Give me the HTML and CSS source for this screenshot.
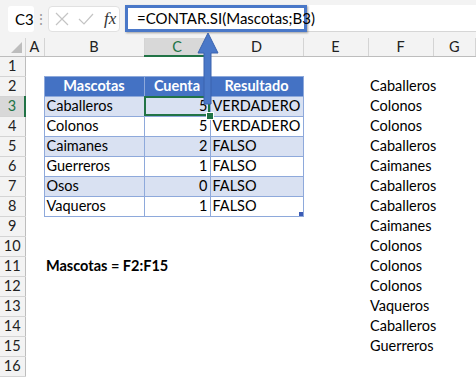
FILE: index.html
```html
<!DOCTYPE html>
<html lang="es">
<head>
    <meta charset="UTF-8">
    <title>CONTAR.SI</title>
    <link rel="stylesheet" href="styles.css">
</head>
<body>
    <div class="formula-bar">
        <div class="name-box">C3</div>
        <div class="dots">&#8942;</div>
        <div class="fx-box">
            <svg class="fx-icon" width="14" height="14" viewBox="0 0 14 14">
                <path d="M1 1 L13 13 M13 1 L1 13" stroke="#c4c4c4" stroke-width="1.2" fill="none"/>
            </svg>
            <svg class="fx-icon" width="16" height="12" viewBox="0 0 16 12">
                <path d="M1 6 L6 11 L15 1" stroke="#c4c4c4" stroke-width="1.2" fill="none"/>
            </svg>
            <span class="fx-label">fx</span>
        </div>
        <div class="formula-input">
            <div class="formula-text">=CONTAR.SI(Mascotas;B3)</div>
        </div>
    </div>

    <table class="sheet">
        <colgroup>
            <col style="width:25px"><col style="width:19px"><col style="width:100px"><col style="width:66px">
            <col style="width:93px"><col style="width:65px"><col style="width:65px"><col>
        </colgroup>
        <thead>
            <tr>
                <th class="corner"><span class="tri"></span></th>
                <th>A</th><th>B</th><th class="sel-col">C</th><th>D</th><th>E</th><th>F</th><th>G</th>
            </tr>
        </thead>
        <tbody>
            <tr><th>1</th><td></td><td></td><td></td><td></td><td></td><td></td><td></td></tr>
            <tr><th>2</th><td></td><td class="t hd">Mascotas</td><td class="t hd">Cuenta</td><td class="t hd">Resultado</td><td></td><td>Caballeros</td><td></td></tr>
            <tr><th class="sel-row">3</th><td></td><td class="t band">Caballeros</td><td class="t band num selected">5</td><td class="t band">VERDADERO</td><td></td><td>Colonos</td><td></td></tr>
            <tr><th>4</th><td></td><td class="t">Colonos</td><td class="t num">5</td><td class="t">VERDADERO</td><td></td><td>Colonos</td><td></td></tr>
            <tr><th>5</th><td></td><td class="t band">Caimanes</td><td class="t band num">2</td><td class="t band">FALSO</td><td></td><td>Caballeros</td><td></td></tr>
            <tr><th>6</th><td></td><td class="t">Guerreros</td><td class="t num">1</td><td class="t">FALSO</td><td></td><td>Caimanes</td><td></td></tr>
            <tr><th>7</th><td></td><td class="t band">Osos</td><td class="t band num">0</td><td class="t band">FALSO</td><td></td><td>Caballeros</td><td></td></tr>
            <tr><th>8</th><td></td><td class="t">Vaqueros</td><td class="t num">1</td><td class="t last">FALSO</td><td></td><td>Caballeros</td><td></td></tr>
            <tr><th>9</th><td></td><td></td><td></td><td></td><td></td><td>Caimanes</td><td></td></tr>
            <tr><th>10</th><td></td><td></td><td></td><td></td><td></td><td>Colonos</td><td></td></tr>
            <tr><th>11</th><td></td><td class="bold" colspan="2">Mascotas = F2:F15</td><td></td><td></td><td>Colonos</td><td></td></tr>
            <tr><th>12</th><td></td><td></td><td></td><td></td><td></td><td>Colonos</td><td></td></tr>
            <tr><th>13</th><td></td><td></td><td></td><td></td><td></td><td>Vaqueros</td><td></td></tr>
            <tr><th>14</th><td></td><td></td><td></td><td></td><td></td><td>Caballeros</td><td></td></tr>
            <tr><th>15</th><td></td><td></td><td></td><td></td><td></td><td>Guerreros</td><td></td></tr>
            <tr><th>16</th><td></td><td></td><td></td><td></td><td></td><td></td><td></td></tr>
        </tbody>
    </table>

    <!-- flecha que une la fórmula con la celda -->
    <svg class="arrow" width="24" height="74" viewBox="0 0 24 74">
        <path d="M12 1 L22 21 L15 21 L15 72 L8 72 L8 21 L2 21 Z" fill="#4A78C8" stroke="#3A63AE" stroke-width="1"/>
    </svg>
</body>
</html>
```

FILE: styles.css
```css
body {
    margin: 0;
    width: 476px;
    height: 377px;
    overflow: hidden;
    background: #fff;
    font-family: Lato, "Open Sans", sans-serif;
    font-size: 14.5px;
    color: #000;
    position: relative;
}
.formula-bar {
    height: 38px;
    background: #f3f3f3;
    display: flex;
    align-items: flex-start;
    box-sizing: border-box;
    padding-top: 6px;
}
.name-box {
    margin-left: 8px;
    width: 26px;
    height: 26px;
    background: #fff;
    border-radius: 3px;
    box-sizing: border-box;
    padding-left: 7px;
    line-height: 26px;
    font-size: 15px;
}
.dots {
    width: 14px;
    text-align: center;
    color: #999;
    line-height: 26px;
    font-size: 14px;
}
.fx-box {
    width: 72px;
    height: 26px;
    background: #fff;
    border: 1px solid #e1e1e1;
    border-radius: 4px;
    box-sizing: border-box;
    display: flex;
    align-items: center;
    padding-left: 6px;
    gap: 9px;
}
.fx-icon {
    display: block;
}
.fx-label {
    font-family: "Liberation Serif", serif;
    font-style: italic;
    font-size: 17px;
    color: #333;
    margin-left: 1px;
}
.formula-input {
    flex: 1;
    margin-left: 5px;
    height: 26px;
    background: #fff;
    border-bottom: 1px solid #d6d6d6;
    margin-top: -1px;
}
.formula-text {
    width: 182px;
    height: 27px;
    box-sizing: border-box;
    border: 3px solid #4A78C8;
    box-shadow: 1px 1px 2px rgba(0, 0, 0, 0.35);
    padding-left: 9px;
    line-height: 21px;
    font-size: 15px;
}
.sheet {
    border-collapse: collapse;
    table-layout: fixed;
    width: 476px;
}
.sheet tr {
    height: 20px;
}
.sheet thead tr {
    height: 18px;
}
.sheet th {
    font-weight: normal;
    background: #f3f3f3;
    color: #222;
    padding: 0;
    border-right: 1px solid #d4d4d4;
    font-size: 14.5px;
    line-height: 16px;
}
.sheet thead th {
    border-bottom: 1px solid #bdbdbd;
}
.sheet thead th.sel-col {
    background: #d8d8d8;
    color: #217346;
    border-bottom: 2px solid #217346;
}
.sheet thead th.corner {
    position: relative;
}
.tri {
    position: absolute;
    right: 3px;
    bottom: 3px;
    border-style: solid;
    border-width: 0 0 11px 11px;
    border-color: transparent transparent #bdbdbd transparent;
}
.sheet tbody th {
    border-bottom: 1px solid #d4d4d4;
    border-right: 1px solid #bdbdbd;
    text-align: center;
    line-height: 18px;
}
.sheet tbody th.sel-row {
    background: #d8d8d8;
    color: #217346;
    border-right: 2px solid #217346;
}
.sheet td {
    padding: 0 2px;
    white-space: nowrap;
    overflow: visible;
    line-height: 18px;
}
.sheet td.t {
    border: 1px solid #8ea9db;
}
.sheet td.hd {
    background: #4472c4;
    color: #fff;
    font-weight: bold;
    text-align: center;
    border-color: #8ea9db;
}
.sheet td.band {
    background: #d9e1f2;
}
.sheet td.num {
    text-align: right;
}
.sheet td.bold {
    font-weight: bold;
}
.sheet td.selected {
    outline: 2px solid #217346;
    outline-offset: -2px;
    position: relative;
}
.sheet td.selected::after {
    content: '';
    position: absolute;
    right: -4px;
    bottom: -4px;
    width: 6px;
    height: 6px;
    background: #217346;
    border: 1px solid #fff;
}
.sheet td.last {
    position: relative;
}
.sheet td.last::after {
    content: '';
    position: absolute;
    right: 0;
    bottom: 0;
    width: 4px;
    height: 4px;
    background: #3b5bb5;
}
.arrow {
    position: absolute;
    left: 196px;
    top: 32px;
}
```
